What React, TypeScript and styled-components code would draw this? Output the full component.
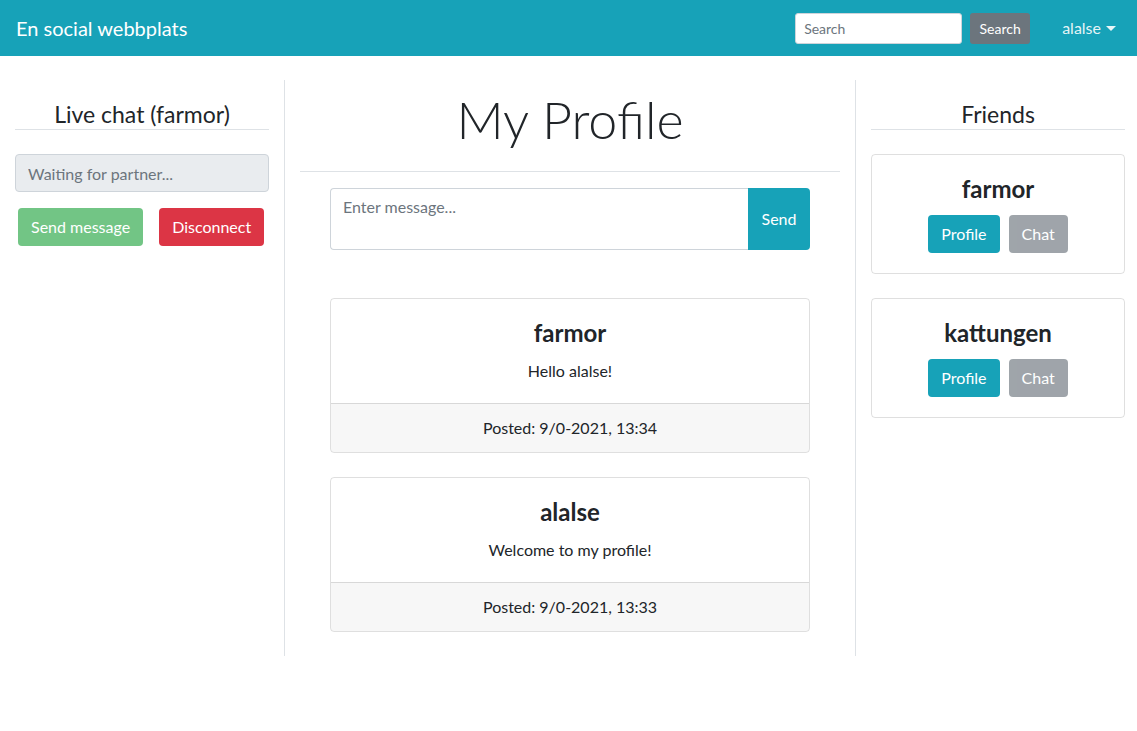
import React from "react";
import styled, { createGlobalStyle } from "styled-components";

const Global = createGlobalStyle`
  * { box-sizing: border-box; }
  body {
    margin: 0;
    font-family: Lato, "Open Sans", sans-serif;
    font-size: 16px;
    line-height: 1.5;
    color: #212529;
    background: #fff;
  }
`;

const NavBar = styled.nav`
  height: 56px;
  background: #17a2b8;
  display: flex;
  align-items: center;
  padding: 0 16px;
`;

const Brand = styled.div`
  color: #fff;
  font-size: 20px;
  line-height: 30px;
  flex: 1;
`;

const SearchForm = styled.form`
  display: flex;
  align-items: center;
  gap: 8px;
`;

const SearchInput = styled.input`
  width: 167px;
  height: 31px;
  border: 1px solid #ced4da;
  border-radius: 3px;
  padding: 4px 8px;
  font: inherit;
  font-size: 14px;
  color: #495057;
  &::placeholder { color: #6c757d; }
`;

const SmallButton = styled.button`
  width: 60px;
  height: 31px;
  border: none;
  border-radius: 3px;
  background: #6c757d;
  color: #fff;
  font: inherit;
  font-size: 14px;
  padding: 0;
`;

const UserMenu = styled.div`
  margin-left: 32px;
  margin-right: 5px;
  color: rgba(255, 255, 255, 0.9);
  display: flex;
  align-items: center;
  gap: 5px;
  &::after {
    content: "";
    border-top: 5px solid rgba(255, 255, 255, 0.9);
    border-left: 5px solid transparent;
    border-right: 5px solid transparent;
  }
`;

const Main = styled.main`
  display: flex;
  align-items: stretch;
  padding-top: 24px;
`;

const LeftCol = styled.section`
  flex: 0 0 285px;
  padding: 0 15px;
  border-right: 1px solid #dee2e6;
`;

const CenterCol = styled.section`
  flex: 0 0 571px;
  padding: 0 15px;
  border-right: 1px solid #dee2e6;
`;

const RightCol = styled.section`
  flex: 1;
  padding: 0 12px 0 15px;
`;

const SideTitle = styled.h4`
  margin: 20px 0 24px;
  font-size: 23px;
  font-weight: 400;
  line-height: 29px;
  text-align: center;
  border-bottom: 1px solid #dee2e6;
`;

const DisabledInput = styled.input`
  display: block;
  width: 100%;
  height: 38px;
  border: 1px solid #ced4da;
  border-radius: 4px;
  background: #e9ecef;
  padding: 6px 12px;
  font: inherit;
  &::placeholder { color: #6c757d; }
`;

const ChatButtons = styled.div`
  display: flex;
  gap: 16px;
  margin-top: 16px;
  padding-left: 3px;
`;

const Btn = styled.button<{ $variant: "success" | "danger" | "info" | "secondary"; $faded?: boolean }>`
  flex-shrink: 0;
  white-space: nowrap;
  height: 38px;
  border: none;
  border-radius: 4px;
  padding: 0 13px;
  font: inherit;
  color: #fff;
  background: ${(p) =>
    ({ success: "#28a745", danger: "#dc3545", info: "#17a2b8", secondary: "#6c757d" }[p.$variant])};
  opacity: ${(p) => (p.$faded ? 0.65 : 1)};
`;

const PageTitle = styled.h1`
  margin: 0;
  padding: 8px 0 20px;
  font-size: 52px;
  font-weight: 300;
  line-height: 63px;
  text-align: center;
`;

const Rule = styled.hr`
  margin: 0 0 16px;
  border: 0;
  border-top: 1px solid #dee2e6;
`;

const Narrow = styled.div`
  margin: 0 30px;
`;

const MessageGroup = styled.form`
  display: flex;
  margin-bottom: 48px;
`;

const MessageArea = styled.textarea`
  flex: 1;
  height: 62px;
  resize: none;
  border: 1px solid #ced4da;
  border-right: none;
  border-radius: 4px 0 0 4px;
  padding: 6px 12px;
  font: inherit;
  color: #495057;
  &::placeholder { color: #6c757d; }
`;

const SendBtn = styled.button`
  width: 62px;
  border: none;
  border-radius: 0 4px 4px 0;
  background: #17a2b8;
  color: #fff;
  font: inherit;
`;

const Card = styled.article`
  border: 1px solid rgba(0, 0, 0, 0.125);
  border-radius: 4px;
  margin-bottom: 24px;
  text-align: center;
  overflow: hidden;
`;

const CardBody = styled.div`
  padding: 20px;
`;

const CardName = styled.h4`
  margin: 0 0 11px;
  font-size: 24px;
  font-weight: 700;
  line-height: 1.2;
`;

const CardText = styled.p`
  margin: 0;
`;

const CardFooter = styled.div`
  border-top: 1px solid rgba(0, 0, 0, 0.125);
  background: rgba(0, 0, 0, 0.03);
  padding: 12px 20px;
`;

const FriendButtons = styled.div`
  display: flex;
  justify-content: center;
  gap: 9px;
`;

const posts = [
  { name: "farmor", text: "Hello alalse!", posted: "Posted: 9/0-2021, 13:34" },
  { name: "alalse", text: "Welcome to my profile!", posted: "Posted: 9/0-2021, 13:33" },
];

const friends = ["farmor", "kattungen"];

export default function App() {
  return (
    <>
      <Global />
      <NavBar>
        <Brand>En social webbplats</Brand>
        <SearchForm onSubmit={(e) => e.preventDefault()}>
          <SearchInput placeholder="Search" />
          <SmallButton type="button">Search</SmallButton>
        </SearchForm>
        <UserMenu>alalse</UserMenu>
      </NavBar>
      <Main>
        <LeftCol>
          <SideTitle>Live chat (farmor)</SideTitle>
          <DisabledInput placeholder="Waiting for partner..." disabled />
          <ChatButtons>
            <Btn $variant="success" $faded>Send message</Btn>
            <Btn $variant="danger">Disconnect</Btn>
          </ChatButtons>
        </LeftCol>
        <CenterCol>
          <PageTitle>My Profile</PageTitle>
          <Rule />
          <Narrow>
            <MessageGroup onSubmit={(e) => e.preventDefault()}>
              <MessageArea placeholder="Enter message..." rows={2} />
              <SendBtn type="button">Send</SendBtn>
            </MessageGroup>
            {posts.map((p) => (
              <Card key={p.posted}>
                <CardBody>
                  <CardName>{p.name}</CardName>
                  <CardText>{p.text}</CardText>
                </CardBody>
                <CardFooter>{p.posted}</CardFooter>
              </Card>
            ))}
          </Narrow>
        </CenterCol>
        <RightCol>
          <SideTitle>Friends</SideTitle>
          {friends.map((f) => (
            <Card key={f}>
              <CardBody>
                <CardName>{f}</CardName>
                <FriendButtons>
                  <Btn $variant="info">Profile</Btn>
                  <Btn $variant="secondary" $faded>Chat</Btn>
                </FriendButtons>
              </CardBody>
            </Card>
          ))}
        </RightCol>
      </Main>
    </>
  );
}
